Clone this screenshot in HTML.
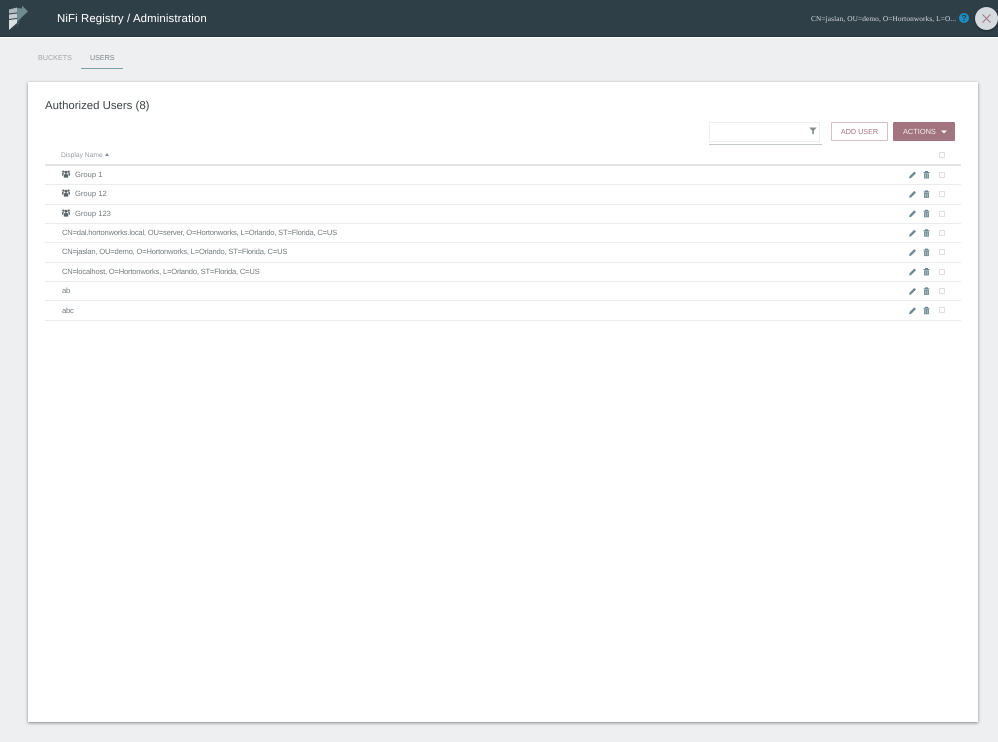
<!DOCTYPE html>
<html>
<head>
<meta charset="utf-8">
<style>
html,body{margin:0;padding:0;width:998px;height:742px;overflow:hidden;background:#eeeff1;font-family:"Liberation Sans",sans-serif;text-rendering:geometricPrecision;}
.a{position:absolute;white-space:nowrap;}
#hdr{left:0;top:0;width:998px;height:36px;background:#2f3f47;border-bottom:1px solid #26343b;box-sizing:content-box;}
#hl{left:0;top:37px;width:998px;height:1px;background:#fff;}
.t{font-size:7.6px;letter-spacing:-.2px;line-height:12px;color:#767d81;}
.g{font-size:7.6px;letter-spacing:0;line-height:12px;color:#767d81;}
.line{position:absolute;left:45px;width:916px;height:1px;background:#ececec;}
.ico{position:absolute;}
.cb{position:absolute;left:939px;width:4px;height:4px;border:1px solid #dcdfe0;background:#fff;border-radius:1px;}
</style>
</head>
<body>
<div class="a" id="hdr"></div>
<div class="a" id="hl"></div>
<svg class="ico" style="left:8px;top:4px" width="22" height="27" viewBox="0 0 22 27">
<path d="M1 5.5L9 3.5V8.5L1 9.5Z" fill="#aeb9bd"/>
<path d="M1 10.5L9 9.5V14L1 15Z" fill="#c5cdd0"/>
<path d="M1 16L9 15V19L1 26Z" fill="#dbe0e2"/>
<path d="M9 4L14 4.5V1.5L20 7.5L14 13L9 18Z" fill="#6f8a91"/>
<path d="M9 19L13 15L9 23Z" fill="#46575e"/>
</svg>
<div class="a" style="left:57px;top:12px;font-size:11.4px;line-height:15px;color:#fff;letter-spacing:.12px;">NiFi Registry / Administration</div>
<div class="a" style="left:811px;top:13px;font-size:7.3px;line-height:11px;color:#d3d9dc;font-family:'Liberation Serif',serif;letter-spacing:.12px;">CN=jaslan, OU=demo, O=Hortonworks, L=O...</div>
<div class="a" style="left:959px;top:13px;width:10px;height:10px;border-radius:50%;background:#1a8fc4;color:#2f3f47;font-size:9px;font-weight:bold;line-height:10px;text-align:center;">?</div>
<div class="a" style="left:975px;top:7px;width:23px;height:23px;border-radius:50%;background:#d5dbde;box-shadow:0 1px 2px rgba(0,0,0,.4);"></div>
<svg class="ico" style="left:981px;top:13px" width="11" height="11" viewBox="0 0 11 11"><path d="M1.5 1.5L9.5 9.5M9.5 1.5L1.5 9.5" stroke="#a37683" stroke-width="1" fill="none"/></svg>

<div class="a" style="left:38px;top:52px;font-size:7.2px;line-height:12px;color:#a3a8ab;">BUCKETS</div>
<div class="a" style="left:90px;top:52px;font-size:7.2px;letter-spacing:-.05px;line-height:12px;color:#7f898e;">USERS</div>
<div class="a" style="left:81px;top:68px;width:42px;height:1px;background:#7ea0a8;"></div>

<div class="a" style="left:28px;top:82px;width:950px;height:640px;background:#fff;box-shadow:0 1px 3px rgba(0,0,0,.45);"></div>
<div class="a" style="left:45px;top:99px;font-size:11.4px;line-height:15px;color:#3d4549;">Authorized Users (8)</div>

<div class="a" style="left:709px;top:122px;width:109px;height:18px;background:#fff;border:1px solid #eceeef;"></div>
<div class="a" style="left:709px;top:144px;width:113px;height:1px;background:#c4c9cb;"></div>
<svg class="ico" style="left:809px;top:127px" width="8" height="8" viewBox="0 0 8 8"><path d="M0.3 0.5H7.7L4.9 3.7V7.5L3.1 6.6V3.7Z" fill="#8a9195"/></svg>
<div class="a" style="left:831px;top:122px;width:55px;height:17px;background:#fff;border:1px solid #d8bfc6;border-radius:1px;font-size:7.2px;line-height:18px;text-align:center;color:#a37683;">ADD USER</div>
<div class="a" style="left:893px;top:122px;width:62px;height:19px;background:#a17480;border-radius:1px;"></div>
<div class="a" style="left:903px;top:122px;font-size:7.4px;line-height:19px;color:#f3e9ec;">ACTIONS</div>
<svg class="ico" style="left:941px;top:130px" width="6" height="4" viewBox="0 0 6 4"><path d="M0 .5H6L3 3.5Z" fill="#fff"/></svg>

<div class="a" style="left:61px;top:149.5px;font-size:6.7px;line-height:11px;color:#9aa1a5;">Display Name</div>
<svg class="ico" style="left:105px;top:153px" width="4" height="3" viewBox="0 0 4 3"><path d="M0 3L2 0L4 3Z" fill="#728e96"/></svg>
<div class="cb" style="top:152px;"></div>
<div class="line" style="top:164px;height:2px;background:#e3e4e5;"></div>

<div class="a g" style="left:75px;top:168.5px;">Group 1</div>
<div class="a g" style="left:75px;top:188px;">Group 12</div>
<div class="a g" style="left:75px;top:208px;">Group 123</div>
<div class="a t" style="left:62px;top:226.5px;">CN=dal.hortonworks.local, OU=server, O=Hortonworks, L=Orlando, ST=Florida, C=US</div>
<div class="a t" style="left:62px;top:246px;">CN=jaslan, OU=demo, O=Hortonworks, L=Orlando, ST=Florida, C=US</div>
<div class="a t" style="left:62px;top:266px;">CN=localhost, O=Hortonworks, L=Orlando, ST=Florida, C=US</div>
<div class="a t" style="left:62px;top:284.5px;">ab</div>
<div class="a t" style="left:62px;top:305px;">abc</div>

<svg class="ico" style="left:62px;top:170px" width="8" height="8" viewBox="0 0 8 8"><g fill="#59646a"><circle cx="4" cy="2.2" r="1.5"/><path d="M1.8 7.6V5Q1.8 4 4 4T6.2 5V7.6Z"/><circle cx="1.3" cy="1.6" r="1.1"/><circle cx="6.7" cy="1.6" r="1.1"/><path d="M0 5.6V3.6Q0 2.9 1.8 3L1.2 5.6ZM8 5.6V3.6Q8 2.9 6.2 3L6.8 5.6Z"/></g></svg>
<svg class="ico" style="left:62px;top:189px" width="8" height="8" viewBox="0 0 8 8"><g fill="#59646a"><circle cx="4" cy="2.2" r="1.5"/><path d="M1.8 7.6V5Q1.8 4 4 4T6.2 5V7.6Z"/><circle cx="1.3" cy="1.6" r="1.1"/><circle cx="6.7" cy="1.6" r="1.1"/><path d="M0 5.6V3.6Q0 2.9 1.8 3L1.2 5.6ZM8 5.6V3.6Q8 2.9 6.2 3L6.8 5.6Z"/></g></svg>
<svg class="ico" style="left:62px;top:209px" width="8" height="8" viewBox="0 0 8 8"><g fill="#59646a"><circle cx="4" cy="2.2" r="1.5"/><path d="M1.8 7.6V5Q1.8 4 4 4T6.2 5V7.6Z"/><circle cx="1.3" cy="1.6" r="1.1"/><circle cx="6.7" cy="1.6" r="1.1"/><path d="M0 5.6V3.6Q0 2.9 1.8 3L1.2 5.6ZM8 5.6V3.6Q8 2.9 6.2 3L6.8 5.6Z"/></g></svg>

<div class="line" style="top:184px;"></div>
<div class="line" style="top:204px;"></div>
<div class="line" style="top:223px;"></div>
<div class="line" style="top:242px;"></div>
<div class="line" style="top:262px;"></div>
<div class="line" style="top:281px;"></div>
<div class="line" style="top:300px;"></div>
<div class="line" style="top:320px;"></div>

<svg class="ico" style="left:905px;top:170px" width="44" height="145" viewBox="0 0 44 145">
<g><path d="M4 8.5L4.6 6.2L9.3 1.5L11 3.2L6.3 7.9Z" fill="#6f8a92"/><path d="M18.5 2H24.5V3H18.5ZM20 1H23V2H20Z" fill="#6f8a92"/><path d="M19 3.3H24V8.5H19Z" fill="#7a949b"/><path d="M20.3 4.3V7.6M22.7 4.3V7.6" stroke="#c5d1d4" stroke-width=".6"/></g>
<g transform="translate(0,19.4)"><path d="M4 8.5L4.6 6.2L9.3 1.5L11 3.2L6.3 7.9Z" fill="#6f8a92"/><path d="M18.5 2H24.5V3H18.5ZM20 1H23V2H20Z" fill="#6f8a92"/><path d="M19 3.3H24V8.5H19Z" fill="#7a949b"/><path d="M20.3 4.3V7.6M22.7 4.3V7.6" stroke="#c5d1d4" stroke-width=".6"/></g>
<g transform="translate(0,38.8)"><path d="M4 8.5L4.6 6.2L9.3 1.5L11 3.2L6.3 7.9Z" fill="#6f8a92"/><path d="M18.5 2H24.5V3H18.5ZM20 1H23V2H20Z" fill="#6f8a92"/><path d="M19 3.3H24V8.5H19Z" fill="#7a949b"/><path d="M20.3 4.3V7.6M22.7 4.3V7.6" stroke="#c5d1d4" stroke-width=".6"/></g>
<g transform="translate(0,58.2)"><path d="M4 8.5L4.6 6.2L9.3 1.5L11 3.2L6.3 7.9Z" fill="#6f8a92"/><path d="M18.5 2H24.5V3H18.5ZM20 1H23V2H20Z" fill="#6f8a92"/><path d="M19 3.3H24V8.5H19Z" fill="#7a949b"/><path d="M20.3 4.3V7.6M22.7 4.3V7.6" stroke="#c5d1d4" stroke-width=".6"/></g>
<g transform="translate(0,77.6)"><path d="M4 8.5L4.6 6.2L9.3 1.5L11 3.2L6.3 7.9Z" fill="#6f8a92"/><path d="M18.5 2H24.5V3H18.5ZM20 1H23V2H20Z" fill="#6f8a92"/><path d="M19 3.3H24V8.5H19Z" fill="#7a949b"/><path d="M20.3 4.3V7.6M22.7 4.3V7.6" stroke="#c5d1d4" stroke-width=".6"/></g>
<g transform="translate(0,97)"><path d="M4 8.5L4.6 6.2L9.3 1.5L11 3.2L6.3 7.9Z" fill="#6f8a92"/><path d="M18.5 2H24.5V3H18.5ZM20 1H23V2H20Z" fill="#6f8a92"/><path d="M19 3.3H24V8.5H19Z" fill="#7a949b"/><path d="M20.3 4.3V7.6M22.7 4.3V7.6" stroke="#c5d1d4" stroke-width=".6"/></g>
<g transform="translate(0,116.4)"><path d="M4 8.5L4.6 6.2L9.3 1.5L11 3.2L6.3 7.9Z" fill="#6f8a92"/><path d="M18.5 2H24.5V3H18.5ZM20 1H23V2H20Z" fill="#6f8a92"/><path d="M19 3.3H24V8.5H19Z" fill="#7a949b"/><path d="M20.3 4.3V7.6M22.7 4.3V7.6" stroke="#c5d1d4" stroke-width=".6"/></g>
<g transform="translate(0,135.8)"><path d="M4 8.5L4.6 6.2L9.3 1.5L11 3.2L6.3 7.9Z" fill="#6f8a92"/><path d="M18.5 2H24.5V3H18.5ZM20 1H23V2H20Z" fill="#6f8a92"/><path d="M19 3.3H24V8.5H19Z" fill="#7a949b"/><path d="M20.3 4.3V7.6M22.7 4.3V7.6" stroke="#c5d1d4" stroke-width=".6"/></g>
</svg>

<div class="cb" style="top:172px;"></div>
<div class="cb" style="top:191px;"></div>
<div class="cb" style="top:211px;"></div>
<div class="cb" style="top:230px;"></div>
<div class="cb" style="top:249px;"></div>
<div class="cb" style="top:269px;"></div>
<div class="cb" style="top:288px;"></div>
<div class="cb" style="top:307px;"></div>
</body>
</html>
